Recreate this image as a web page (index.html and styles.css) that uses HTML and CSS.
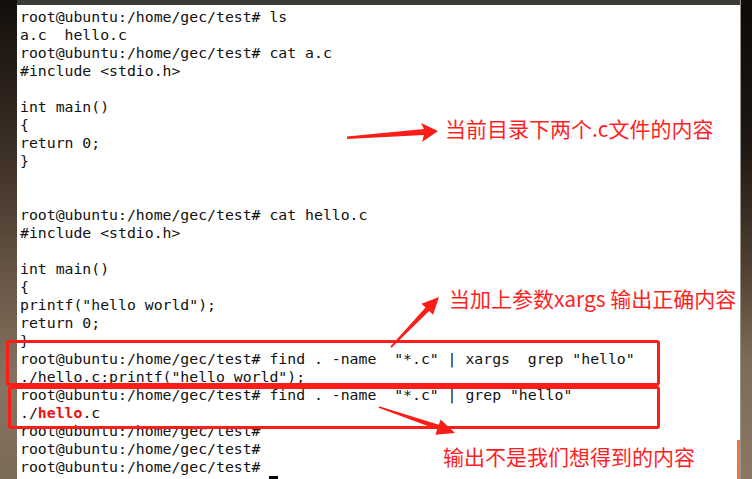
FILE: index.html
```html
<!DOCTYPE html>
<html lang="zh-CN">
<head>
  <meta charset="UTF-8">
  <title>find | xargs grep</title>
  <link rel="stylesheet" href="styles.css">
</head>
<body>

  <div class="desktop">
    <div class="wood wood-left"></div>

    <!-- Terminal window -->
    <div class="terminal">
      <div class="titlebar"></div>
<pre class="screen">root@ubuntu:/home/gec/test# ls
a.c  hello.c
root@ubuntu:/home/gec/test# cat a.c
#include &lt;stdio.h&gt;

int main()
{
return 0;
}


root@ubuntu:/home/gec/test# cat hello.c
#include &lt;stdio.h&gt;

int main()
{
printf("hello world");
return 0;
}
root@ubuntu:/home/gec/test# find . -name  "*.c" | xargs  grep "hello"
./hello.c:printf("hello world");
root@ubuntu:/home/gec/test# find . -name  "*.c" | grep "hello"
./<span class="match">hello</span>.c
root@ubuntu:/home/gec/test#
root@ubuntu:/home/gec/test#
root@ubuntu:/home/gec/test#
root@ubuntu:/home/gec/test# <span class="cursor"> </span></pre>
    </div>

    <div class="wood wood-right"></div>
  </div>

  <!-- Annotations drawn over the screenshot -->
  <div class="mark-box box-xargs"></div>
  <div class="mark-box box-grep"></div>

  <svg class="arrows" width="752" height="479" viewBox="0 0 752 479">
    <polygon points="347,136.5 424,129 421,123 438,131 422,142 424,135 347,139"/>
    <polygon points="390.4,346.5 425.5,307.6 421.5,303.8 439,297 433.1,314.8 429.1,311 391.6,347.8"/>
    <polygon points="379,406.2 438.8,424.8 440.6,419.6 455,433 435.4,434.8 437.2,429.6 378.6,407.8"/>
  </svg>

  <div class="note note-files">当前目录下两个.c文件的内容</div>
  <div class="note note-xargs">当加上参数xargs 输出正确内容</div>
  <div class="note note-grep">输出不是我们想得到的内容</div>

  <div class="edge-tab"></div>

</body>
</html>
```

FILE: styles.css
```css
html, body {
  margin: 0;
  padding: 0;
  width: 752px;
  height: 479px;
  overflow: hidden;
  background: #1a1410;
}

.desktop {
  display: flex;
  width: 752px;
  height: 479px;
}

.wood-left {
  width: 17px;
  background: linear-gradient(to bottom, #140f0c 0%, #2a2019 18%, #4a3b2f 40%, #6b5a49 60%, #857460 80%, #7a6a58 100%);
}

.wood-right {
  width: 11px;
  border-left: 1px solid #9a948c;
  background: linear-gradient(to bottom, #0d0a08 0%, #1e1712 30%, #4d3e31 55%, #7d6b57 75%, #8a7864 100%);
}

.terminal {
  flex: 1;
  display: flex;
  flex-direction: column;
  background: #fff;
  overflow: hidden;
}

.titlebar {
  height: 5px;
  flex-shrink: 0;
  background: #3c3b37;
}

.screen {
  margin: 0;
  padding: 3px 0 0 3px;
  font-family: "DejaVu Sans Mono", monospace;
  font-size: 14.8px;
  line-height: 18px;
  color: #111;
  white-space: pre;
}

.match {
  color: #f20d0d;
  font-weight: bold;
}

.cursor {
  background: #000;
}

.mark-box {
  position: absolute;
  box-sizing: border-box;
  border: 3px solid #fb1d17;
  border-radius: 3px;
}

.box-xargs {
  left: 6px;
  top: 340px;
  width: 654px;
  height: 46px;
}

.box-grep {
  left: 8px;
  top: 386px;
  width: 652px;
  height: 43px;
}

.arrows {
  position: absolute;
  left: 0;
  top: 0;
}

.arrows polygon {
  fill: #fb1d17;
}

.note {
  position: absolute;
  font-family: "Noto Sans CJK SC", "Noto Sans", sans-serif;
  font-size: 21px;
  line-height: 24px;
  color: #ff1f1f;
  white-space: nowrap;
}

.note-files {
  left: 445px;
  top: 116px;
}

.note-xargs {
  left: 449px;
  top: 286px;
}

.note-grep {
  left: 443px;
  top: 444px;
}

.edge-tab {
  position: absolute;
  left: 737px;
  top: 440px;
  width: 3px;
  height: 39px;
  background: #e8784a;
}
```
